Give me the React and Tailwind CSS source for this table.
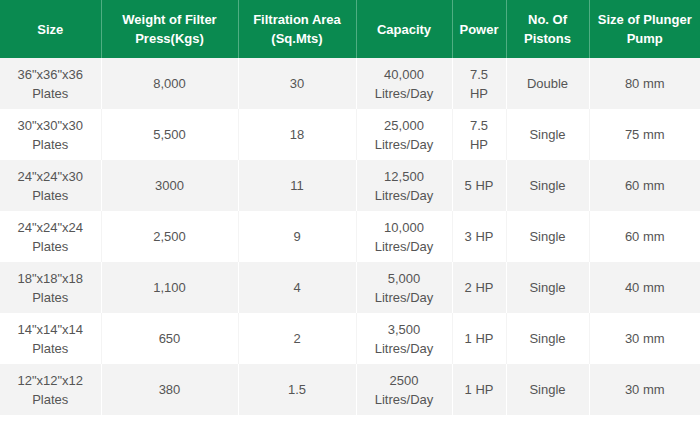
const COLS = [
  { label: ['Size'], w: 'w-[101px]' },
  { label: ['Weight of Filter', 'Press(Kgs)'], w: 'w-[137px]' },
  { label: ['Filtration Area', '(Sq.Mts)'], w: 'w-[118px]' },
  { label: ['Capacity'], w: 'w-[96px]' },
  { label: ['Power'], w: 'w-[54px]' },
  { label: ['No. Of', 'Pistons'], w: 'w-[83px]' },
  { label: ['Size of Plunger', 'Pump'], w: 'w-[111px]' },
];

const ROWS = [
  ['36"x36"x36 Plates', '8,000', '30', '40,000 Litres/Day', '7.5 HP', 'Double', '80 mm'],
  ['30"x30"x30 Plates', '5,500', '18', '25,000 Litres/Day', '7.5 HP', 'Single', '75 mm'],
  ['24"x24"x30 Plates', '3000', '11', '12,500 Litres/Day', '5 HP', 'Single', '60 mm'],
  ['24"x24"x24 Plates', '2,500', '9', '10,000 Litres/Day', '3 HP', 'Single', '60 mm'],
  ['18"x18"x18 Plates', '1,100', '4', '5,000 Litres/Day', '2 HP', 'Single', '40 mm'],
  ['14"x14"x14 Plates', '650', '2', '3,500 Litres/Day', '1 HP', 'Single', '30 mm'],
  ['12"x12"x12 Plates', '380', '1.5', '2500 Litres/Day', '1 HP', 'Single', '30 mm'],
];

export default function App() {
  return (
    <div className="w-[700px] h-[423px] bg-white font-['Liberation_Sans',Arial,sans-serif]">
      <table className="w-[700px] table-fixed border-collapse text-center text-[13px] leading-[19px]">
        <thead>
          <tr className="h-[58px] bg-[#0a8a50] text-white">
            {COLS.map((c, i) => (
              <th
                key={i}
                className={`${c.w} font-bold px-1 border-x border-[#4fae82] first:border-l-0 last:border-r-0`}
              >
                {c.label.map((l, j) => (
                  <div key={j}>{l}</div>
                ))}
              </th>
            ))}
          </tr>
        </thead>
        <tbody>
          {ROWS.map((row, r) => (
            <tr
              key={r}
              className={`h-[51px] text-[#555555] ${r % 2 === 0 ? 'bg-[#f3f3f3]' : 'bg-white'}`}
            >
              {row.map((cell, i) => (
                <td
                  key={i}
                  className={`px-2 border-x first:border-l-0 last:border-r-0 ${
                    r % 2 === 0 ? 'border-white' : 'border-[#f4f4f4]'
                  }`}
                >
                  {cell}
                </td>
              ))}
            </tr>
          ))}
        </tbody>
      </table>
    </div>
  );
}
